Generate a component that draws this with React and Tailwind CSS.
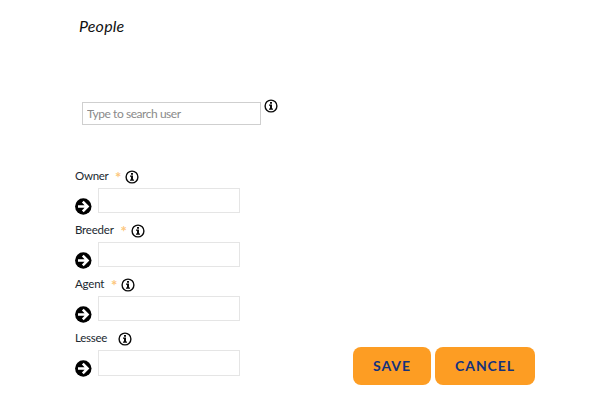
import React from 'react';

const people = [
  { label: 'Owner', required: true, width: 'w-[40px]', spacing: 'tracking-[-0.3px]' },
  { label: 'Breeder', required: true, width: 'w-[45.5px]', spacing: 'tracking-[-0.2px]' },
  { label: 'Agent', required: true, width: 'w-[36px]', spacing: 'tracking-[-0.2px]' },
  { label: 'Lessee', required: false, width: 'w-[42.5px]', spacing: 'tracking-[-0.25px]' },
];

const InfoIcon = () => (
  <svg viewBox="0 0 14 14" className="w-[14px] h-[14px] shrink-0" fill="none">
    <circle cx="7" cy="7" r="5.9" stroke="#0b0b0b" strokeWidth="1.4" />
    <path d="M6 3.1h2v1.7H6zM5 5.6h3v3.9h1v1.2H5V9.5h1V6.8H5z" fill="#0b0b0b" />
  </svg>
);

const ArrowIcon = () => (
  <svg viewBox="0 0 17 17" className="w-[17px] h-[17px] mt-[10px] shrink-0" fill="none">
    <circle cx="8.3" cy="8.5" r="8.2" fill="#000" />
    <path d="M3 8.5h9M7.8 3.7l4.8 4.8-4.8 4.8" stroke="#fff" strokeWidth="2.5" />
  </svg>
);

const PersonField = ({ label, required, width, spacing }) => (
  <div className="h-[54.2px]">
    <div className="flex items-center h-[15px]">
      <span className={`-mt-[2px] text-[11.5px] leading-[15px] whitespace-nowrap text-[#202830] ${width} ${spacing}`}>
        {label}
      </span>
      {required && <span className="w-[10px] h-[15px] text-[15px] leading-[16px] font-bold text-[#fdc67c]">*</span>}
      <div className="mt-[1px]">
        <InfoIcon />
      </div>
    </div>
    <div className="flex items-start mt-[4px]">
      <ArrowIcon />
      <input
        type="text"
        aria-label={label}
        className="ml-[5.5px] w-[142.5px] h-[25.5px] border border-[#e5e5e5] bg-white px-1 outline-none"
      />
    </div>
  </div>
);

const App = () => {
  return (
    <div className="w-[600px] h-[407px] bg-white overflow-hidden pl-[75px] font-['Lato','Open_Sans',sans-serif]">
      <h2 className="pl-[4px] pt-[16px] text-[16px] leading-[20px] italic text-[#111] tracking-[0.2px]">People</h2>

      {/* User search */}
      <div className="flex items-start mt-[62px] pl-[7px]">
        <input
          type="text"
          placeholder="Type to search user"
          className="w-[179px] h-[23px] mt-[4px] border border-[#cfcfcf] px-[4px] pb-[1px] text-[12px] tracking-[-0.45px] placeholder:text-[#8a8a8a] outline-none"
        />
        <div className="ml-[3px] pt-[1px]">
          <InfoIcon />
        </div>
      </div>

      <div className="flex mt-[43.6px]">
        {/* People fields */}
        <div className="w-[278px]">
          {people.map((person) => (
            <PersonField key={person.label} {...person} />
          ))}
        </div>

        {/* Actions */}
        <div className="flex gap-[4px] mt-[178.4px]">
          <button className="w-[78px] h-[38px] rounded-lg bg-[#fd9d23] text-[#14327d] text-[14px] pb-[1px] font-bold tracking-[0.9px]">
            SAVE
          </button>
          <button className="w-[100px] h-[38px] rounded-lg bg-[#fd9d23] text-[#14327d] text-[14px] pb-[1px] font-bold tracking-[0.9px]">
            CANCEL
          </button>
        </div>
      </div>
    </div>
  );
};

export default App;
